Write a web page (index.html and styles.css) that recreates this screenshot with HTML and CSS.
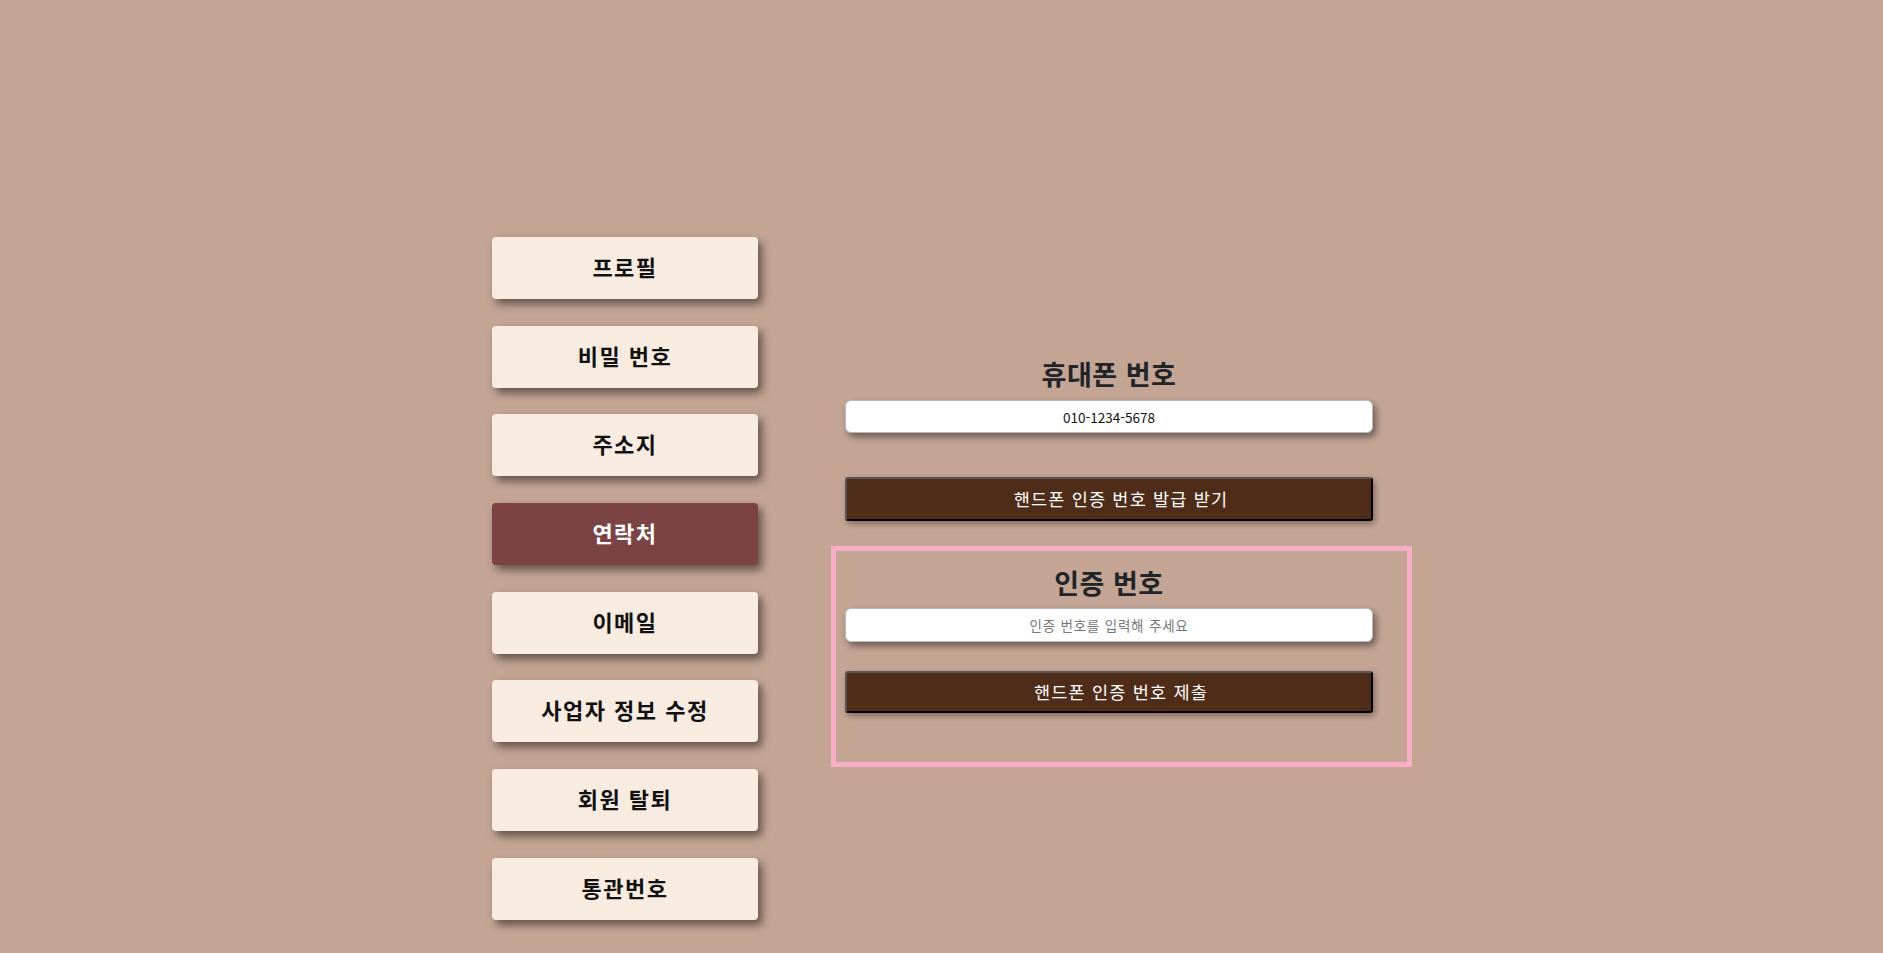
FILE: index.html
```html
<!DOCTYPE html>
<html lang="ko">
<head>
    <meta charset="UTF-8">
    <meta name="viewport" content="width=device-width, initial-scale=1.0">
    <title>연락처 수정</title>
    <link rel="stylesheet" href="styles.css">
</head>
<body>

    <div class="container">
        <!-- Side menu -->
        <nav class="side-menu">
            <button class="menu-item">프로필</button>
            <button class="menu-item">비밀 번호</button>
            <button class="menu-item">주소지</button>
            <button class="menu-item active">연락처</button>
            <button class="menu-item">이메일</button>
            <button class="menu-item">사업자 정보 수정</button>
            <button class="menu-item">회원 탈퇴</button>
            <button class="menu-item">통관번호</button>
        </nav>

        <!-- Phone form -->
        <div class="form-panel">
            <div class="field-group phone-group">
                <h2>휴대폰 번호</h2>
                <input type="text" class="text-input" value="010-1234-5678">
                <button class="dark-button">핸드폰 인증 번호 발급 받기</button>
            </div>

            <div class="verify-box">
                <div class="field-group">
                    <h2>인증 번호</h2>
                    <input type="text" class="text-input" placeholder="인증 번호를 입력해 주세요">
                    <button class="dark-button">핸드폰 인증 번호 제출</button>
                </div>
            </div>
        </div>
    </div>

</body>
</html>
```

FILE: styles.css
```css
* {
    margin: 0;
    padding: 0;
    box-sizing: border-box;
    font-family: "Noto Sans CJK KR", "Noto Sans", sans-serif;
}

body {
    background: #C4A594;
    min-height: 100vh;
}

.container {
    display: flex;
    justify-content: center;
    align-items: flex-start;
    gap: 73px;
    padding-top: 237px;
    padding-left: 21px;
}

.side-menu {
    width: 266px;
    display: flex;
    flex-direction: column;
}

.menu-item {
    height: 62px;
    margin-bottom: 26.7px;
    padding-bottom: 4px;
    border: none;
    border-radius: 4px;
    background: #F8EBE0;
    color: #111;
    font-size: 22px;
    font-weight: bold;
    letter-spacing: 1.5px;
    box-shadow: 4px 5px 9px rgba(0, 0, 0, 0.5);
    cursor: pointer;
}

.menu-item:last-child {
    margin-bottom: 0;
}

.menu-item.active {
    background: #7B4343;
    color: #fff;
}

.form-panel {
    width: 581px;
    padding-top: 121px;
}

.field-group {
    width: 528px;
    display: flex;
    flex-direction: column;
}

.phone-group {
    margin-left: 14px;
}

.field-group h2 {
    font-size: 27px;
    line-height: 32px;
    font-weight: bold;
    color: #212529;
    text-align: center;
    letter-spacing: 0.5px;
}

.text-input {
    height: 33px;
    margin-top: 10px;
    border: 1px solid #bbb;
    border-radius: 6px;
    background: #fff;
    text-align: center;
    font-size: 13.5px;
    color: #111;
    box-shadow: 3px 4px 7px rgba(0, 0, 0, 0.45);
    outline: none;
}

.text-input::placeholder {
    color: #777;
    letter-spacing: 0.8px;
}

.dark-button {
    height: 44px;
    margin-top: 44px;
    padding-left: 24px;
    padding-bottom: 2px;
    border: 2px solid;
    border-color: #555 #000 #000 #555;
    border-radius: 3px;
    background: #4E2C18;
    color: #fff;
    font-size: 17.5px;
    letter-spacing: 1.2px;
    box-shadow: 2px 3px 6px rgba(0, 0, 0, 0.35);
    cursor: pointer;
}

.verify-box {
    margin-top: 25px;
    width: 581px;
    border: 5px solid #F9AEC8;
    padding: 16px 35px 49px 9px;
}

.verify-box .text-input {
    height: 34px;
    margin-top: 9px;
}

.verify-box .dark-button {
    height: 42px;
    margin-top: 29px;
}
```
